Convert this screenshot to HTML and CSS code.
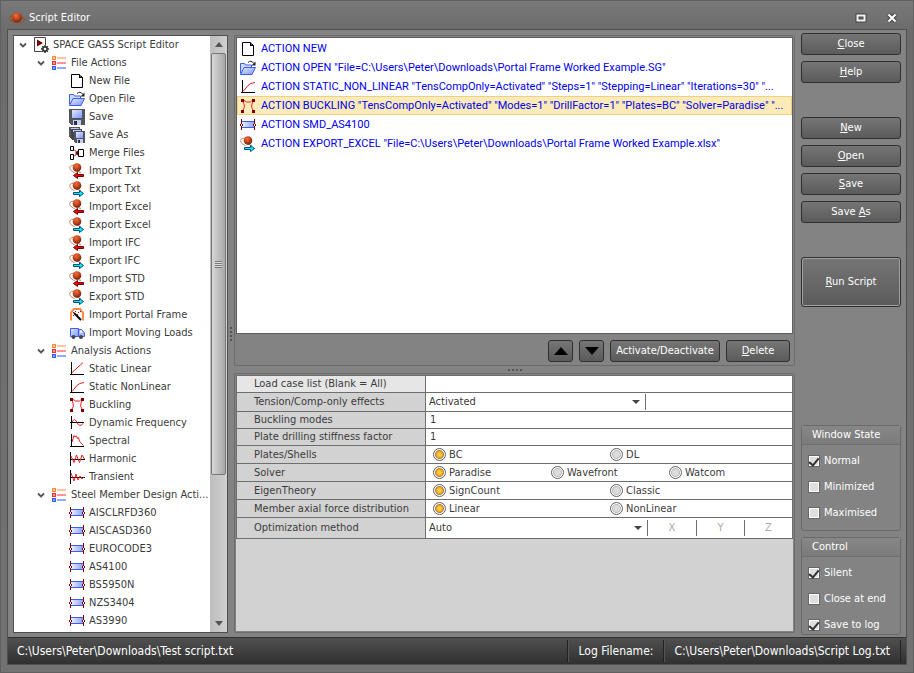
FILE: index.html
```html
<!DOCTYPE html>
<html lang="en">

<head>
    <meta charset="UTF-8">
    <meta name="viewport" content="width=device-width, initial-scale=1.0">
    <title>Script Editor</title>
    <link rel="stylesheet" href="styles.css">
</head>

<body>
    <!-- Icon definitions -->
    <svg class="sprite" aria-hidden="true">
        <defs>
            <radialGradient id="ball" cx="0.4" cy="0.3" r="0.7">
                <stop offset="0" stop-color="#f07040" />
                <stop offset="0.5" stop-color="#c8461c" />
                <stop offset="1" stop-color="#70260f" />
            </radialGradient>
            <linearGradient id="blue" x1="0" y1="0" x2="1" y2="1">
                <stop offset="0" stop-color="#e4eaff" />
                <stop offset="1" stop-color="#7d96ff" />
            </linearGradient>
            <linearGradient id="beam" x1="0" x2="1">
                <stop offset="0" stop-color="#eef2ff" />
                <stop offset="1" stop-color="#8f9ff5" />
            </linearGradient>
        </defs>
        <symbol id="i-logo" viewBox="0 0 16 16">
            <ellipse cx="8" cy="9" rx="7.5" ry="3.5" fill="none" stroke="#a04a2c" transform="rotate(8 8 9)" />
            <circle cx="8" cy="7.5" r="5" fill="url(#ball)" />
        </symbol>
        <symbol id="i-script" viewBox="0 0 16 16">
            <path d="M1.500 .5h11v14h-11z" fill="#fff" stroke="#444" />
            <path d="M4 2.500l6 3.500-6 3.500z" fill="#7a0000" />
            <circle cx="12" cy="12" r="4" fill="#fff" />
            <path d="M12 8v8M8 12h8M9.200 9.200l5.600 5.600M14.800 9.200l-5.600 5.600" stroke="#333" stroke-width="1.600" />
            <circle cx="12" cy="12" r="2.800" fill="#333" />
            <circle cx="12" cy="12" r="1.300" fill="#fff" />
        </symbol>
        <symbol id="i-group" viewBox="0 0 16 16" shape-rendering="crispEdges">
            <path d="M6 2h9v2h-9z" fill="#ffc59c" />
            <path d="M6 7h9v2h-9z" fill="#ff9494" />
            <path d="M6 12h9v2h-9z" fill="#94a6ff" />
            <path d="M1.500 1.500h3v3h-3z" fill="#ffc59c" stroke="#f58a42" />
            <path d="M1.500 6.500h3v3h-3z" fill="#ff9494" stroke="#ec3535" />
            <path d="M1.500 11.500h3v3h-3z" fill="#94a6ff" stroke="#3858f0" />
        </symbol>
        <symbol id="i-new" viewBox="0 0 16 16">
            <path d="M2.500 1.500h8l3 3v10h-11z" fill="#fff" stroke="#000" />
            <path d="M10 1v4h4z" fill="#000" />
            <path d="M11 2.500h1v1h-1z" fill="#d8d820" />
        </symbol>
        <symbol id="i-open" viewBox="0 0 16 16">
            <path d="M.5 13.500v-10h4l1 1.500h6v3" fill="#cfdaff" stroke="#3a5cf0" />
            <path d="M.5 14.500l3.500-7h11.500l-3.500 7z" fill="url(#blue)" stroke="#3a5cf0" />
            <path d="M8 2.500q3-3 6 1" fill="none" stroke="#222" />
            <path d="M15.500 1.500v4h-4z" fill="#222" />
        </symbol>
        <symbol id="i-save" viewBox="0 0 16 16" shape-rendering="crispEdges">
            <path d="M0 0h16v16h-14l-2-2z" fill="#55555c" />
            <path d="M3 1h10v8h-10z" fill="url(#blue)" />
            <path d="M4 11h8v5h-8z" fill="#c3cef5" />
            <path d="M5 12h3v4h-3z" fill="#26314d" />
        </symbol>
        <symbol id="i-saveas" viewBox="0 0 16 16" shape-rendering="crispEdges">
            <path d="M0 0h11v11h-10l-1-1z" fill="#55555c" />
            <path d="M2 1h8v2h-8z" fill="#b8c6ff" />
            <path d="M2 2h11v11h-10l-1-1z" fill="#44444c" />
            <path d="M4 3h8v2h-8z" fill="#b8c6ff" />
            <path d="M5 4h11v12h-10l-1-1z" fill="#55555c" />
            <path d="M7 5h7v6h-7z" fill="url(#blue)" />
            <path d="M8 12h6v4h-6z" fill="#c3cef5" />
            <path d="M9 13h2v3h-2z" fill="#26314d" />
        </symbol>
        <symbol id="i-merge" viewBox="0 0 16 16">
            <path d="M1.500 1.500h3v4h-3zM1.500 9.500h3v5h-3zM9.500 4.500h5v7h-5z" fill="#fff" stroke="#000" />
            <path d="M5 4.500l3 3M5 11.500l3-3" stroke="#b00000" fill="none" />
            <path d="M6 8l3-2.500v5z" fill="#7a0000" />
        </symbol>
        <symbol id="i-import" viewBox="0 0 16 16">
            <path d="M6 2.500c-7-1.500-7 5-.5 7" fill="none" stroke="#c08068" />
            <path d="M7 8l5 1.500" stroke="#c08068" />
            <circle cx="8" cy="4.500" r="4.300" fill="url(#ball)" />
            <path d="M4.500 12.500l4-3v2h6v2h-6v2z" fill="#f00000" stroke="#780000" />
        </symbol>
        <symbol id="i-export" viewBox="0 0 16 16">
            <path d="M6 2.500c-7-1.500-7 5-.5 7" fill="none" stroke="#c08068" />
            <path d="M7 8l5 1.500" stroke="#c08068" />
            <circle cx="8" cy="4.500" r="4.300" fill="url(#ball)" />
            <path d="M14.500 12.500l-4-3v2h-6v2h6v2z" fill="#00f0ff" stroke="#004a80" />
        </symbol>
        <symbol id="i-portal" viewBox="0 0 16 16">
            <path d="M2 13.500v-8l3-3.500h6l3 3.500v8" fill="none" stroke="#ff8c42" stroke-width="2" />
            <path d="M5 6l7 7" stroke="#000" stroke-width="2" />
            <path d="M4 5h1v1h-1zM6 4h1v1h-1zM9 5h1v1h-1zM4 8h1v1h-1zM8 7h1v1h-1zM11 4h1v1h-1z" fill="#c00000" />
        </symbol>
        <symbol id="i-truck" viewBox="0 0 16 16">
            <path d="M1.500 3.500h8v8h-8z" fill="url(#blue)" stroke="#3a5cf0" />
            <path d="M9.500 4.500h3l3 3.500v3.500h-6z" fill="#a8b8ff" stroke="#3a5cf0" />
            <path d="M11 5.500h1.500l1.500 2h-3z" fill="#fff" />
            <circle cx="4.500" cy="12" r="2" fill="#444" />
            <circle cx="12" cy="12" r="2" fill="#444" />
        </symbol>
        <symbol id="i-linear" viewBox="0 0 16 16">
            <path d="M2 12.500l12-11" stroke="#e02020" fill="none" />
            <path d="M2.500 1v13M1 13.500h14" stroke="#000" fill="none" />
        </symbol>
        <symbol id="i-nonlinear" viewBox="0 0 16 16">
            <path d="M3 12.500l5-6q2-2.500 7-3" stroke="#e02020" fill="none" />
            <path d="M2.500 1v13M1 13.500h14" stroke="#000" fill="none" />
        </symbol>
        <symbol id="i-buckling" viewBox="0 0 16 16">
            <path d="M2.500 13q3-4 1.500-7l-1.500-3.500q3 0 4 1.500h4q1-1.500 3-1.500l-1.500 3.500q-1.500 3 1.500 7" fill="none" stroke="#f02020" />
            <path d="M1 1h3v3h-3zM12 1h3v3h-3zM1 12h3v3h-3zM12 12h3v3h-3z" fill="#7a0000" />
        </symbol>
        <symbol id="i-dynamic" viewBox="0 0 16 16">
            <path d="M2.500 1v13M1 7.500h14" stroke="#000" fill="none" />
            <path d="M3 7q2.500-5 5 .5t6.500.5" fill="none" stroke="#e02020" />
        </symbol>
        <symbol id="i-spectral" viewBox="0 0 16 16">
            <path d="M3 9l2-6.500 1 1.500 1.500-1 1 2.500 1-1 1 4 4 4" fill="none" stroke="#e02020" />
            <path d="M2.500 1v13M1 13.500h14" stroke="#000" fill="none" />
        </symbol>
        <symbol id="i-harmonic" viewBox="0 0 16 16">
            <path d="M1.500 1v14M1 8.500h15" stroke="#000" fill="none" />
            <path d="M2 5l3 6.500 2.500-7.500 3 7.500 2.500-7.500 2.500 4" fill="none" stroke="#e02020" />
        </symbol>
        <symbol id="i-transient" viewBox="0 0 16 16">
            <path d="M1.500 1v14M1 8.500h15" stroke="#000" fill="none" />
            <path d="M2 4l3 8 2-7 2 6 2-4 2 3 2-2" fill="none" stroke="#e02020" />
        </symbol>
        <symbol id="i-member" viewBox="0 0 16 16" shape-rendering="crispEdges">
            <path d="M2 5h12v6h-12z" fill="url(#beam)" />
            <path d="M2 4.500h12M2 10.500h12" stroke="#3a5cf0" />
            <path d="M1.500 2v11M14.500 2v11" stroke="#7a0000" />
            <path d="M0 7h1v2h-1zM2 7h1v2h-1zM13 7h1v2h-1zM15 7h1v2h-1z" fill="#7a0000" />
            <path d="M1 7h1v2h-1zM14 7h1v2h-1z" fill="#fff" />
        </symbol>
        <symbol id="i-caret" viewBox="0 0 8 8">
            <path d="M1 2.500l3 3 3-3" fill="none" stroke="#555" stroke-width="1.800" />
        </symbol>
    </svg>

    <header class="titlebar">
        <svg class="icon"><use href="#i-logo" /></svg>
        <h1>Script Editor</h1>
        <button class="win-button" aria-label="Maximize">
            <svg width="12" height="10" viewBox="0 0 12 10"><path d="M2.500 2.500h7v5h-7z" fill="none" stroke="#444" stroke-width="4" /><path d="M2.500 2.500h7v5h-7z" fill="none" stroke="#f4f4f4" stroke-width="2" /></svg>
        </button>
        <button class="win-button" aria-label="Close window">
            <svg width="12" height="10" viewBox="0 0 12 10"><path d="M2.500 1.500l7 7M9.500 1.500l-7 7" stroke="#444" stroke-width="4" /><path d="M2.500 1.500l7 7M9.500 1.500l-7 7" stroke="#fff" stroke-width="2" /></svg>
        </button>
    </header>

    <div class="window">
        <main class="workspace">
            <!-- Action tree -->
            <nav class="tree-panel" aria-label="Script actions">
                <ul class="tree">
                    <li>
                        <div class="node"><button class="toggle" aria-label="Collapse"><svg><use href="#i-caret" /></svg></button><svg class="icon"><use href="#i-script" /></svg><span>SPACE GASS Script Editor</span></div>
                        <ul>
                            <li>
                                <div class="node"><button class="toggle" aria-label="Collapse"><svg><use href="#i-caret" /></svg></button><svg class="icon"><use href="#i-group" /></svg><span>File Actions</span></div>
                                <ul class="leaves">
                                    <li class="node"><svg class="icon"><use href="#i-new" /></svg><span>New File</span></li>
                                    <li class="node"><svg class="icon"><use href="#i-open" /></svg><span>Open File</span></li>
                                    <li class="node"><svg class="icon"><use href="#i-save" /></svg><span>Save</span></li>
                                    <li class="node"><svg class="icon"><use href="#i-saveas" /></svg><span>Save As</span></li>
                                    <li class="node"><svg class="icon"><use href="#i-merge" /></svg><span>Merge Files</span></li>
                                    <li class="node"><svg class="icon"><use href="#i-import" /></svg><span>Import Txt</span></li>
                                    <li class="node"><svg class="icon"><use href="#i-export" /></svg><span>Export Txt</span></li>
                                    <li class="node"><svg class="icon"><use href="#i-import" /></svg><span>Import Excel</span></li>
                                    <li class="node"><svg class="icon"><use href="#i-export" /></svg><span>Export Excel</span></li>
                                    <li class="node"><svg class="icon"><use href="#i-import" /></svg><span>Import IFC</span></li>
                                    <li class="node"><svg class="icon"><use href="#i-export" /></svg><span>Export IFC</span></li>
                                    <li class="node"><svg class="icon"><use href="#i-import" /></svg><span>Import STD</span></li>
                                    <li class="node"><svg class="icon"><use href="#i-export" /></svg><span>Export STD</span></li>
                                    <li class="node"><svg class="icon"><use href="#i-portal" /></svg><span>Import Portal Frame</span></li>
                                    <li class="node"><svg class="icon"><use href="#i-truck" /></svg><span>Import Moving Loads</span></li>
                                </ul>
                            </li>
                            <li>
                                <div class="node"><button class="toggle" aria-label="Collapse"><svg><use href="#i-caret" /></svg></button><svg class="icon"><use href="#i-group" /></svg><span>Analysis Actions</span></div>
                                <ul class="leaves">
                                    <li class="node"><svg class="icon"><use href="#i-linear" /></svg><span>Static Linear</span></li>
                                    <li class="node"><svg class="icon"><use href="#i-nonlinear" /></svg><span>Static NonLinear</span></li>
                                    <li class="node"><svg class="icon"><use href="#i-buckling" /></svg><span>Buckling</span></li>
                                    <li class="node"><svg class="icon"><use href="#i-dynamic" /></svg><span>Dynamic Frequency</span></li>
                                    <li class="node"><svg class="icon"><use href="#i-spectral" /></svg><span>Spectral</span></li>
                                    <li class="node"><svg class="icon"><use href="#i-harmonic" /></svg><span>Harmonic</span></li>
                                    <li class="node"><svg class="icon"><use href="#i-transient" /></svg><span>Transient</span></li>
                                </ul>
                            </li>
                            <li>
                                <div class="node"><button class="toggle" aria-label="Collapse"><svg><use href="#i-caret" /></svg></button><svg class="icon"><use href="#i-group" /></svg><span>Steel Member Design Acti...</span></div>
                                <ul class="leaves">
                                    <li class="node"><svg class="icon"><use href="#i-member" /></svg><span>AISCLRFD360</span></li>
                                    <li class="node"><svg class="icon"><use href="#i-member" /></svg><span>AISCASD360</span></li>
                                    <li class="node"><svg class="icon"><use href="#i-member" /></svg><span>EUROCODE3</span></li>
                                    <li class="node"><svg class="icon"><use href="#i-member" /></svg><span>AS4100</span></li>
                                    <li class="node"><svg class="icon"><use href="#i-member" /></svg><span>BS5950N</span></li>
                                    <li class="node"><svg class="icon"><use href="#i-member" /></svg><span>NZS3404</span></li>
                                    <li class="node"><svg class="icon"><use href="#i-member" /></svg><span>AS3990</span></li>
                                </ul>
                            </li>
                        </ul>
                    </li>
                </ul>
                <div class="scrollbar" aria-hidden="true">
                    <span class="arrow arrow-up"></span>
                    <span class="thumb"><i class="grip"></i></span>
                    <span class="track"></span>
                    <span class="arrow arrow-down"></span>
                </div>
            </nav>

            <div class="splitter splitter-v"></div>

            <div class="center">
                <!-- Script actions -->
                <section class="panel script-panel">
                    <ul class="script">
                        <li><svg class="icon"><use href="#i-new" /></svg><span>ACTION NEW</span></li>
                        <li><svg class="icon"><use href="#i-open" /></svg><span>ACTION OPEN "File=C:\Users\Peter\Downloads\Portal Frame Worked Example.SG"</span></li>
                        <li><svg class="icon"><use href="#i-nonlinear" /></svg><span>ACTION STATIC_NON_LINEAR "TensCompOnly=Activated" "Steps=1" "Stepping=Linear" "Iterations=30" "...</span></li>
                        <li class="selected"><svg class="icon"><use href="#i-buckling" /></svg><span>ACTION BUCKLING "TensCompOnly=Activated" "Modes=1" "DrillFactor=1" "Plates=BC" "Solver=Paradise" "...</span></li>
                        <li><svg class="icon"><use href="#i-member" /></svg><span>ACTION SMD_AS4100</span></li>
                        <li><svg class="icon"><use href="#i-export" /></svg><span>ACTION EXPORT_EXCEL "File=C:\Users\Peter\Downloads\Portal Frame Worked Example.xlsx"</span></li>
                    </ul>
                    <div class="script-buttons">
                        <button class="btn btn-arrow" aria-label="Move up"><svg width="14" height="8" viewBox="0 0 14 8"><path d="M0 8l7-8 7 8z" /></svg></button>
                        <button class="btn btn-arrow" aria-label="Move down"><svg width="14" height="8" viewBox="0 0 14 8"><path d="M0 0l7 8 7-8z" /></svg></button>
                        <button class="btn btn-toggle">Activate/Deactivate</button>
                        <button class="btn btn-delete"><u>D</u>elete</button>
                    </div>
                </section>

                <div class="splitter splitter-h"></div>

                <!-- Parameters of the selected action -->
                <section class="panel props-panel">
                    <table class="props">
                        <tr class="row-text current">
                            <th scope="row"><label for="cases">Load case list (Blank = All)</label></th>
                            <td><input type="text" id="cases" value=""></td>
                        </tr>
                        <tr class="row-select">
                            <th scope="row"><label for="tension">Tension/Comp-only effects</label></th>
                            <td>
                                <div class="cells">
                                    <div class="select select-tension"><select id="tension"><option>Activated</option></select></div>
                                </div>
                            </td>
                        </tr>
                        <tr class="row-text">
                            <th scope="row"><label for="modes">Buckling modes</label></th>
                            <td><input type="text" id="modes" value="1"></td>
                        </tr>
                        <tr class="row-text">
                            <th scope="row"><label for="drilling">Plate drilling stiffness factor</label></th>
                            <td><input type="text" id="drilling" value="1"></td>
                        </tr>
                        <tr class="row-radio">
                            <th scope="row">Plates/Shells</th>
                            <td>
                                <div class="options">
                                    <label><input type="radio" name="plates" checked>BC</label>
                                    <label><input type="radio" name="plates">DL</label>
                                </div>
                            </td>
                        </tr>
                        <tr class="row-radio">
                            <th scope="row">Solver</th>
                            <td>
                                <div class="options">
                                    <label><input type="radio" name="solver" checked>Paradise</label>
                                    <label><input type="radio" name="solver">Wavefront</label>
                                    <label><input type="radio" name="solver">Watcom</label>
                                </div>
                            </td>
                        </tr>
                        <tr class="row-radio">
                            <th scope="row">EigenTheory</th>
                            <td>
                                <div class="options">
                                    <label><input type="radio" name="eigen" checked>SignCount</label>
                                    <label><input type="radio" name="eigen">Classic</label>
                                </div>
                            </td>
                        </tr>
                        <tr class="row-radio">
                            <th scope="row">Member axial force distribution</th>
                            <td>
                                <div class="options">
                                    <label><input type="radio" name="axial" checked>Linear</label>
                                    <label><input type="radio" name="axial">NonLinear</label>
                                </div>
                            </td>
                        </tr>
                        <tr class="row-last">
                            <th scope="row"><label for="optimization">Optimization method</label></th>
                            <td>
                                <div class="cells">
                                    <div class="select select-method"><select id="optimization"><option>Auto</option></select></div>
                                    <button class="axis" disabled>X</button>
                                    <button class="axis" disabled>Y</button>
                                    <button class="axis" disabled>Z</button>
                                </div>
                            </td>
                        </tr>
                    </table>
                </section>
            </div>

            <!-- Commands and options -->
            <aside class="side">
                <div class="commands">
                    <button class="btn"><u>C</u>lose</button>
                    <button class="btn"><u>H</u>elp</button>
                </div>
                <div class="commands">
                    <button class="btn"><u>N</u>ew</button>
                    <button class="btn"><u>O</u>pen</button>
                    <button class="btn"><u>S</u>ave</button>
                    <button class="btn">Save <u>A</u>s</button>
                </div>
                <button class="btn btn-run"><u>R</u>un Script</button>

                <section class="group group-state">
                    <h2>Window State</h2>
                    <label><input type="checkbox" checked>Normal</label>
                    <label><input type="checkbox">Minimized</label>
                    <label><input type="checkbox">Maximised</label>
                </section>
                <section class="group group-control">
                    <h2>Control</h2>
                    <label><input type="checkbox" checked>Silent</label>
                    <label><input type="checkbox">Close at end</label>
                    <label><input type="checkbox" checked>Save to log</label>
                </section>
            </aside>
        </main>

        <footer class="statusbar">
            <span class="status-file">C:\Users\Peter\Downloads\Test script.txt</span>
            <span class="status-cell">Log Filename:</span>
            <span class="status-cell">C:\Users\Peter\Downloads\Script Log.txt</span>
            <span class="status-end"></span>
        </footer>
    </div>
</body>

</html>
```

FILE: styles.css
```css
* {
    box-sizing: border-box;
}

body {
    margin: 0;
    height: 100vh;
    padding: 0 6px 7px;
    display: flex;
    flex-direction: column;
    background: linear-gradient(#7a7a7a, #6c6c6c 29px, #727272);
    border: 1px solid #606060;
    color: #3b3b3b;
    font-family: Tahoma, "DejaVu Sans Condensed", sans-serif;
    font-size: 11px;
    line-height: 16px;
    overflow: hidden;
}

ul {
    list-style: none;
    margin: 0;
    padding: 0;
}

button,
input,
select {
    font: inherit;
    color: inherit;
    margin: 0;
}

.sprite {
    position: absolute;
    width: 0;
    height: 0;
}

.icon {
    width: 16px;
    height: 16px;
    flex: none;
}

/* Title bar */
.titlebar {
    display: flex;
    align-items: center;
    height: 28px;
    padding: 6px 5px 0 2px;
    flex: none;
}

.titlebar h1 {
    flex: 1;
    margin: 0 0 0 4px;
    font-size: 11px;
    font-weight: normal;
    color: #fff;
}

.win-button {
    display: flex;
    justify-content: center;
    width: 20px;
    margin-left: 11px;
    padding: 0;
    border: none;
    background: none;
}

.window {
    flex: 1;
    min-height: 0;
    display: flex;
    flex-direction: column;
    border: 1px solid #505050;
    background-color: #838383;
}

.workspace {
    flex: 1;
    min-height: 0;
    display: flex;
    padding: 3px 5px 2px;
}

/* Tree */
.tree-panel {
    display: flex;
    flex: none;
    width: 215px;
    margin: 2px 0;
    background-color: #fff;
    border: 1px solid #505050;
}

.tree {
    flex: 1;
    min-width: 0;
    padding-left: 1px;
    overflow: hidden;
}

.tree ul {
    padding-left: 18px;
}

.tree .leaves {
    padding-left: 36px;
}

.node {
    display: flex;
    align-items: center;
    height: 18px;
    white-space: nowrap;
}

.node .icon {
    margin-right: 4px;
}

.toggle {
    display: flex;
    flex: none;
    justify-content: center;
    width: 18px;
    padding: 0 3px 0 0;
    border: none;
    background: none;
}

.toggle svg {
    width: 8px;
    height: 8px;
}

.scrollbar {
    display: flex;
    flex-direction: column;
    width: 17px;
    background: linear-gradient(90deg, #bdbdbd, #d0d0d0);
}

.arrow {
    height: 17px;
    display: flex;
    align-items: center;
    justify-content: center;
}

.arrow::after {
    content: "";
    border: 4px solid transparent;
}

.arrow-up::after {
    border-top: none;
    border-bottom: 5px solid #555;
}

.arrow-down::after {
    border-bottom: none;
    border-top: 5px solid #555;
}

.thumb {
    flex: 3;
    display: flex;
    align-items: center;
    justify-content: center;
    margin: 0 1px;
    border: 1px solid #777;
    border-radius: 2px;
    background: linear-gradient(90deg, #d6d6d6, #a8a8a8);
}

.grip {
    width: 7px;
    height: 7px;
    background: repeating-linear-gradient(#777 0 1px, #ddd 1px 2px);
}

.track {
    flex: 1;
}

/* Splitters */
.splitter {
    flex: none;
    display: flex;
    align-items: center;
    justify-content: center;
}

.splitter::after {
    content: "";
}

.splitter-v {
    width: 6px;
}

.splitter-v::after {
    width: 2px;
    height: 14px;
    background: repeating-linear-gradient(#555 0 2px, transparent 2px 4px);
}

.splitter-h {
    height: 7px;
}

.splitter-h::after {
    width: 14px;
    height: 2px;
    background: repeating-linear-gradient(90deg, #555 0 2px, transparent 2px 4px);
}

/* Center panels */
.center {
    flex: 1;
    min-width: 0;
    display: flex;
    flex-direction: column;
    margin: 2px 6px 2px 0;
}

.panel {
    padding: 1px;
    border: 1px solid #6c6c6c;
    border-radius: 2px;
}

.script-panel {
    flex: 331;
    display: flex;
    flex-direction: column;
}

.script {
    flex: 1;
    padding-top: 1px;
    background-color: #fff;
    border: 1px solid #606060;
    color: #0000f0;
    font-family: Roboto, sans-serif;
}

.script li {
    display: flex;
    align-items: center;
    gap: 5px;
    height: 19px;
    padding: 0 2px;
    border: 1px solid transparent;
    white-space: nowrap;
}

.script .selected {
    background-color: #fbebb8;
    border-color: #efcf80;
}

.script-buttons {
    display: flex;
    justify-content: flex-end;
    gap: 6px;
    padding: 6px 3px 2px;
}

.props-panel {
    flex: 259;
    background-color: #d2d2d2;
    background-clip: content-box;
}

.props {
    width: 100%;
    table-layout: fixed;
    border-collapse: collapse;
    background-color: #fff;
}

.props th,
.props td {
    padding: 0;
    border: 1px solid #6e6e6e;
}

.props th {
    width: 34%;
    padding-left: 17px;
    background-color: #d2d2d2;
    font-weight: normal;
    text-align: left;
    white-space: nowrap;
}

.props .current th {
    background-color: #e6e6e6;
}

.row-text {
    height: 17px;
}

.row-radio {
    height: 18px;
}

.row-select {
    height: 19px;
}

.row-last {
    height: 21px;
}

.props input[type="text"] {
    display: block;
    width: 100%;
    height: 16px;
    padding: 0 4px;
    border: none;
    background: none;
}

.cells {
    display: flex;
    align-items: center;
}

.select {
    position: relative;
    border-right: 1px solid #6e6e6e;
}

.select-tension {
    width: 60%;
}

.select-method {
    flex: 1;
}

.select select {
    display: block;
    width: 100%;
    height: 16px;
    padding: 0 3px;
    border: none;
    background: none;
    appearance: none;
}

.select::after {
    content: "";
    position: absolute;
    top: 6px;
    right: 5px;
    border: 4px solid transparent;
    border-top-color: #444;
    border-bottom: none;
    pointer-events: none;
}

.axis {
    width: 48px;
    height: 16px;
    padding: 0;
    border: none;
    background: none;
    color: #aaa;
}

.axis + .axis {
    border-left: 1px solid #6e6e6e;
}

.options {
    display: flex;
    padding: 0 5px 0 7px;
}

.options label {
    flex: 1;
    display: flex;
    align-items: center;
    gap: 3px;
}

input[type="radio"] {
    appearance: none;
    width: 13px;
    height: 13px;
    border: 1px solid #606060;
    border-radius: 50%;
    background: radial-gradient(circle, #dcdcdc 0 3px, #bbb 4px, #fff 5px);
}

input[type="radio"]:checked {
    background: radial-gradient(circle, #ffd24a 0 1px, #f5a81c 3px, #b08040 4px, #fff 5px);
}

/* Buttons */
.btn {
    height: 22px;
    padding: 0;
    border: 1px solid #303030;
    border-radius: 3px;
    background: linear-gradient(#757575, #5b5b5b);
    color: #fff;
}

.btn:hover {
    background: linear-gradient(#828282, #686868);
}

.btn-arrow {
    width: 25px;
}

.btn-toggle {
    width: 110px;
}

.btn-delete {
    width: 64px;
}

.btn svg {
    display: block;
    margin: 0 auto;
}

/* Right column */
.side {
    display: flex;
    flex-direction: column;
    width: 100px;
    flex: none;
}

.commands {
    display: flex;
    flex-direction: column;
    gap: 6px;
    margin-bottom: 34px;
}

.btn-run {
    height: 50px;
    box-shadow: inset 0 0 0 1px #a0a0a0;
}

.group {
    border: 1px solid #6a6a6a;
    border-radius: 3px;
    color: #fff;
}

.group h2 {
    margin: 0 0 8px;
    padding: 1px 10px;
    border-bottom: 1px solid #6e6e6e;
    background: linear-gradient(#878787, #7b7b7b);
    font-size: 11px;
    font-weight: normal;
}

.group label {
    display: flex;
    align-items: center;
    gap: 4px;
    margin-bottom: 10px;
    padding-left: 6px;
}

.group label:last-child {
    margin-bottom: 0;
}

.group-state {
    margin-top: auto;
    margin-bottom: 6px;
    padding-bottom: 9px;
}

.group-control {
    padding-bottom: 1px;
}

input[type="checkbox"] {
    appearance: none;
    display: flex;
    justify-content: center;
    width: 12px;
    height: 12px;
    border: 1px solid #666;
    background-color: #dedede;
    box-shadow: inset 0 0 0 1px #fff;
}

input[type="checkbox"]:checked::after {
    content: "";
    width: 4px;
    height: 8px;
    border: solid #333;
    border-width: 0 2px 2px 0;
    transform: rotate(40deg);
}

/* Status bar */
.statusbar {
    display: flex;
    align-items: center;
    height: 27px;
    flex: none;
    padding: 0 5px 0 9px;
    border-top: 1px solid #303030;
    background: linear-gradient(#505050, #303030);
    color: #fff;
    font-size: 12px;
}

.status-file {
    flex: 1;
}

.status-cell,
.status-end {
    padding: 3px 10px;
    border-left: 1px solid #222;
    box-shadow: inset 1px 0 #555;
}

.status-end {
    padding: 0;
    height: 22px;
}
```
